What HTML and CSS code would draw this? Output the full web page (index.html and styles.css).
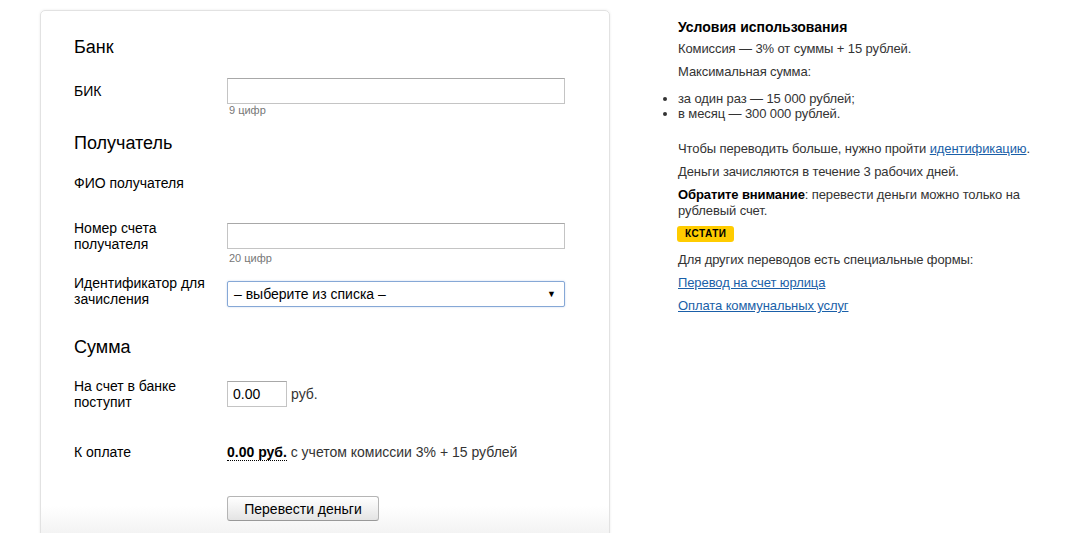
FILE: index.html
```html
<!DOCTYPE html>
<html lang="ru">

<head>
  <meta charset="UTF-8">
  <title>Перевод на банковский счет</title>
  <link rel="stylesheet" href="styles.css">
</head>

<body>
  <div class="page">
    <!-- Форма перевода -->
    <form class="card">
      <h2 class="section-title first">Банк</h2>
      <div class="row row-bik">
        <label class="label">БИК</label>
        <input class="field" type="text">
        <div class="hint">9 цифр</div>
      </div>

      <h2 class="section-title after-hint">Получатель</h2>
      <div class="row row-fio">
        <label class="label">ФИО получателя</label>
      </div>
      <div class="row row-account">
        <label class="label">Номер счета<br>получателя</label>
        <input class="field" type="text">
        <div class="hint">20 цифр</div>
      </div>
      <div class="row row-ident">
        <label class="label">Идентификатор для<br>зачисления</label>
        <div class="select">
          <span>– выберите из списка –</span>
          <span class="select-arrow">▼</span>
        </div>
      </div>

      <h2 class="section-title">Сумма</h2>
      <div class="row row-sum">
        <label class="label">На счет в банке<br>поступит</label>
        <div class="sum-field">
          <input class="field field-small" type="text" value="0.00">
          <span class="unit">руб.</span>
        </div>
      </div>
      <div class="row row-pay">
        <label class="label">К оплате</label>
        <div class="total"><b class="total-value">0.00 руб.</b> с учетом комиссии 3% + 15 рублей</div>
      </div>
      <div class="row row-submit">
        <span></span>
        <div><button class="btn" type="button">Перевести деньги</button></div>
      </div>
    </form>

    <!-- Условия -->
    <div class="side">
      <h3 class="side-title">Условия использования</h3>
      <p class="first-p">Комиссия — 3% от суммы + 15 рублей.</p>
      <p>Максимальная сумма:</p>
      <ul class="limits">
        <li>за один раз — 15 000 рублей;</li>
        <li>в месяц — 300 000 рублей.</li>
      </ul>
      <p>Чтобы переводить больше, нужно пройти <a href="#">идентификацию</a>.</p>
      <p>Деньги зачисляются в течение 3 рабочих дней.</p>
      <p><b>Обратите внимание</b>: перевести деньги можно только на рублевый счет.</p>
      <div class="badge">Кстати</div>
      <p class="other">Для других переводов есть специальные формы:</p>
      <p><a href="#">Перевод на счет юрлица</a></p>
      <p><a href="#">Оплата коммунальных услуг</a></p>
    </div>
  </div>
</body>

</html>
```

FILE: styles.css
```css
html,
body {
  margin: 0;
  height: 100%;
  overflow: hidden;
  background: #fff;
  font-family: "Liberation Sans", Arial, sans-serif;
  color: #000;
}

.page {
  display: flex;
  align-items: flex-start;
  padding: 10px 0 0 40px;
}

/* Карточка с формой */
.card {
  box-sizing: border-box;
  width: 570px;
  min-height: 540px;
  padding: 25px 0 0 33px;
  border: 1px solid #e2e2e2;
  border-radius: 5px 5px 0 0;
  box-shadow: 0 0 3px rgba(0, 0, 0, 0.08);
  background: linear-gradient(to bottom, #fff 0, #fff 495px, #ececec 100%);
}

.section-title {
  margin: 29px 0 0;
  font-size: 18px;
  font-weight: normal;
  line-height: 22px;
}

.section-title.first {
  margin-top: 0;
}

.section-title.after-hint {
  margin-top: 15px;
}

.row {
  display: grid;
  grid-template-columns: 153px 338px;
  align-items: center;
  font-size: 14px;
}

.label {
  line-height: 16px;
}

.hint {
  grid-column: 2;
  font-size: 11px;
  line-height: 13px;
  color: #777;
  padding-left: 2px;
}

.row-bik {
  margin-top: 20px;
}

.row-fio {
  margin-top: 16px;
  min-height: 26px;
}

.row-account {
  margin-top: 24px;
}

.row-ident {
  margin-top: 16px;
}

.row-ident .label {
  margin-top: -7px;
}

.row-sum {
  margin-top: 20px;
}

.row-pay {
  margin-top: 29px;
  min-height: 26px;
}

.row-submit {
  margin-top: 31px;
}

.field {
  box-sizing: border-box;
  width: 338px;
  height: 26px;
  margin: 0;
  padding: 0 5px;
  border: 1px solid #c4c4c4;
  border-top-color: #a8a8a8;
  font: 14px "Liberation Sans", Arial, sans-serif;
  color: #000;
  background: #fff;
}

.field-small {
  width: 60px;
}

.sum-field {
  display: flex;
  align-items: center;
  gap: 4px;
}

.unit {
  color: #333;
}

.select {
  box-sizing: border-box;
  display: flex;
  justify-content: space-between;
  align-items: center;
  width: 338px;
  height: 26px;
  padding: 0 6px;
  border: 1px solid #86a8d6;
  border-radius: 2px;
  box-shadow: 0 0 2px rgba(80, 130, 200, 0.35);
  font-size: 14px;
  background: #fff;
}

.select-arrow {
  font-size: 9px;
  color: #000;
  padding-right: 2px;
}

.total {
  color: #333;
}

.total-value {
  color: #000;
  border-bottom: 1px dotted #000;
}

.btn {
  box-sizing: border-box;
  width: 152px;
  height: 25px;
  padding: 0;
  border: 1px solid #b5b5b5;
  border-bottom-color: #999;
  border-radius: 3px;
  background: linear-gradient(to bottom, #fff, #e4e4e4);
  font: 14px "Liberation Sans", Arial, sans-serif;
  color: #000;
}

/* Правая колонка */
.side {
  width: 360px;
  margin-left: 68px;
  padding-top: 8px;
  font-size: 13px;
  line-height: 16px;
  color: #333;
  letter-spacing: -0.1px;
}

.side-title {
  margin: 0;
  font-size: 14px;
  line-height: 18px;
  color: #000;
  letter-spacing: 0;
}

.side p {
  margin: 0 0 7px;
}

.side p.first-p {
  margin-top: 5px;
}

.side b {
  color: #000;
}

.limits {
  margin: 11px 0 20px;
  padding-left: 0;
  line-height: 15px;
  list-style: disc outside;
}

.side a {
  color: #1a5fa8;
  text-decoration: underline;
}

.badge {
  display: block;
  width: fit-content;
  height: 16px;
  padding: 0 8px;
  margin: 0 0 10px -1px;
  border-radius: 3px;
  background: #fc0;
  color: #000;
  font-size: 10px;
  font-weight: bold;
  line-height: 16px;
  text-transform: uppercase;
  letter-spacing: 0.5px;
}
```
